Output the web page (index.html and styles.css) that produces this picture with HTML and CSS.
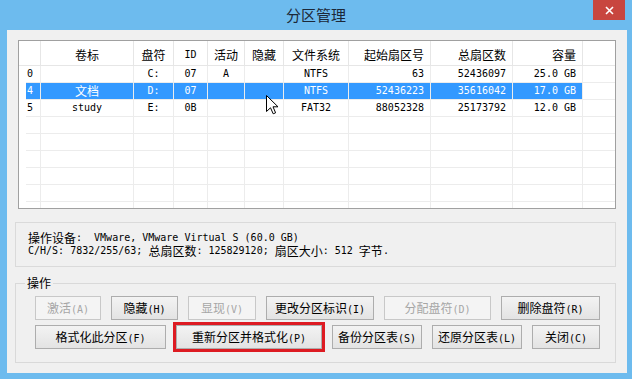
FILE: index.html
```html
<!DOCTYPE html>
<html lang="zh-CN">
<head>
  <meta charset="UTF-8">
  <title>分区管理</title>
  <link rel="stylesheet" href="styles.css">
</head>
<body>
  <div class="window">
    <div class="titlebar">
      <div class="title">分区管理</div>
      <div class="close">
        <svg width="9" height="9" viewBox="0 0 9 9"><path d="M1 1 L8 8 M8 1 L1 8" stroke="#fff" stroke-width="1.6"/></svg>
      </div>
    </div>

    <div class="client">
      <div class="list">
        <div class="row head">
          <div></div><div>卷标</div><div>盘符</div><div class="m">ID</div><div>活动</div><div>隐藏</div><div>文件系统</div><div>起始扇区号</div><div>总扇区数</div><div>容量</div><div></div>
        </div>
        <div class="row">
          <div>0</div><div></div><div>C:</div><div>07</div><div>A</div><div></div><div>NTFS</div><div>63</div><div>52436097</div><div>25.0 GB</div><div></div>
        </div>
        <div class="row sel">
          <div>4</div><div class="c">文档</div><div>D:</div><div>07</div><div></div><div></div><div>NTFS</div><div>52436223</div><div>35616042</div><div>17.0 GB</div><div></div>
        </div>
        <div class="row">
          <div>5</div><div>study</div><div>E:</div><div>0B</div><div></div><div></div><div>FAT32</div><div>88052328</div><div>25173792</div><div>12.0 GB</div><div></div>
        </div>
        <div class="row"><div></div><div></div><div></div><div></div><div></div><div></div><div></div><div></div><div></div><div></div><div></div></div>
        <div class="row"><div></div><div></div><div></div><div></div><div></div><div></div><div></div><div></div><div></div><div></div><div></div></div>
        <div class="row"><div></div><div></div><div></div><div></div><div></div><div></div><div></div><div></div><div></div><div></div><div></div></div>
        <div class="row"><div></div><div></div><div></div><div></div><div></div><div></div><div></div><div></div><div></div><div></div><div></div></div>
        <div class="row"><div></div><div></div><div></div><div></div><div></div><div></div><div></div><div></div><div></div><div></div><div></div></div>
        <div class="row"><div></div><div></div><div></div><div></div><div></div><div></div><div></div><div></div><div></div><div></div><div></div></div>

        <svg class="cursor" width="13" height="20" viewBox="0 0 13 20">
          <path d="M0.5 0.5 L0.5 16.5 L4.5 12.8 L7.2 18.8 L9.6 17.8 L7 11.8 L12 11.8 Z" fill="#fff" stroke="#000" stroke-width="1" stroke-linejoin="miter"/>
        </svg>
      </div>

      <div class="info">
        <div class="line"><span class="c">操作设备</span>:  VMware, VMware Virtual S (60.0 GB)</div>
        <div class="line">C/H/S: 7832/255/63; <span class="c">总扇区数</span>: 125829120; <span class="c">扇区大小</span>: 512 <span class="c">字节</span>.</div>
      </div>

      <fieldset class="ops">
        <legend>操作</legend>
        <div class="btn-row">
          <button class="btn w66" disabled>激活<span class="k">(A)</span></button>
          <button class="btn w67">隐藏<span class="k">(H)</span></button>
          <button class="btn w68" disabled>显现<span class="k">(V)</span></button>
          <button class="btn w108">更改分区标识<span class="k">(I)</span></button>
          <button class="btn w107" disabled>分配盘符<span class="k">(D)</span></button>
          <button class="btn w99">删除盘符<span class="k">(R)</span></button>
        </div>
        <div class="btn-row">
          <button class="btn w131">格式化此分区<span class="k">(F)</span></button>
          <button class="btn w146 marked">重新分区并格式化<span class="k">(P)</span></button>
          <button class="btn w90">备份分区表<span class="k">(S)</span></button>
          <button class="btn w90">还原分区表<span class="k">(L)</span></button>
          <button class="btn w68">关闭<span class="k">(C)</span></button>
        </div>
      </fieldset>
    </div>
  </div>
</body>
</html>
```
FILE: styles.css
```css
* {
  box-sizing: border-box;
}
body {
  margin: 0;
  background: #6dbbee;
  font-family: "DejaVu Sans Mono", "Noto Sans CJK SC", monospace;
  font-size: 10px;
  color: #000;
}
.window {
  width: 632px;
  height: 379px;
}

/* title bar */
.titlebar {
  height: 30px;
  display: grid;
  grid-template-columns: 1fr auto 1fr;
  align-items: start;
}
.title {
  grid-column: 2;
  font-family: "Noto Sans CJK SC", sans-serif;
  font-size: 15px;
  line-height: 30px;
  color: #1c2838;
}
.close {
  grid-column: 3;
  justify-self: end;
  margin-right: 7px;
  width: 32px;
  height: 20px;
  background: #c8463f;
  display: flex;
  align-items: center;
  justify-content: center;
}

/* client area */
.client {
  margin: 0 5px 0 7px;
  height: 343px;
  background: #f0f0f0;
  padding: 10px 0 0 8px;
}
.c {
  font-family: "Noto Sans CJK SC", sans-serif;
  font-size: 12px;
}

/* partition list */
.list {
  position: relative;
  margin-left: 3px;
  width: 598px;
  height: 169px;
  border: 1px solid #a0a0a0;
  background: #fff;
  overflow: hidden;
}
.row {
  display: grid;
  grid-template-columns: 22px 93px 40px 34px 37px 39px 65px 82px 82px 70px 1fr;
  height: 17px;
}
.row > div {
  border-right: 1px solid #ececec;
  border-bottom: 1px solid #ececec;
  line-height: 16px;
  padding: 0 6px;
  text-align: center;
  white-space: nowrap;
}
.row > div:first-child {
  margin-left: 7px;
  padding: 0 0 0 1px;
  text-align: left;
}
.row > div:nth-child(n+8):nth-child(-n+10) {
  text-align: right;
}
.row > div:last-child {
  border-right: none;
}
.head {
  height: 25px;
}
.head > div {
  font-family: "Noto Sans CJK SC", sans-serif;
  font-size: 12px;
  line-height: 20px;
  padding-top: 4px;
  border-color: #e6e6e6;
}
.head > div:first-child {
  margin-left: 0;
}
.head > div.m {
  font-family: "DejaVu Sans Mono", monospace;
  font-size: 10px;
}
.sel > div:not(:last-child) {
  background: #3399ff;
  color: #fff;
}
.cursor {
  position: absolute;
  left: 247px;
  top: 54px;
}

/* device info */
.info {
  margin-top: 13px;
  width: 601px;
  height: 45px;
  border: 1px solid #dadada;
  padding: 8px 12px 0;
}
.line {
  height: 13px;
  line-height: 13px;
  white-space: pre;
}
.line .c {
  display: inline-block;
  height: 13px;
  line-height: 13px;
  vertical-align: top;
}

/* operations */
.ops {
  margin: 9px 0 0;
  width: 601px;
  min-width: 0;
  border: 1px solid #d9d9d9;
  padding: 0 0 13px 19px;
}
.ops legend {
  margin-left: -10px;
  padding: 0 2px;
  font-family: "Noto Sans CJK SC", sans-serif;
  font-size: 12px;
  line-height: 14px;
}
.btn-row {
  display: flex;
  gap: 10px;
  margin-top: 6px;
}
.btn-row + .btn-row {
  margin-top: 5px;
}
.btn {
  height: 24px;
  padding: 0;
  border: 1px solid #adadad;
  background: linear-gradient(#f3f3f3, #e3e3e3);
  font-family: "Noto Sans CJK SC", sans-serif;
  font-size: 12px;
  line-height: 22px;
  color: #000;
  text-align: center;
}
.btn .k {
  font-family: "DejaVu Sans Mono", monospace;
  font-size: 10px;
}
.btn:disabled {
  color: #a6a6a6;
  border-color: #c8c8c8;
  background: #f4f4f4;
}
.btn.marked {
  outline: 3px solid #dd1b22;
}
.w66 { width: 66px; }
.w67 { width: 67px; }
.w68 { width: 68px; }
.w90 { width: 90px; }
.w99 { width: 99px; }
.w107 { width: 107px; }
.w108 { width: 108px; }
.w131 { width: 131px; }
.w146 { width: 146px; }
```
